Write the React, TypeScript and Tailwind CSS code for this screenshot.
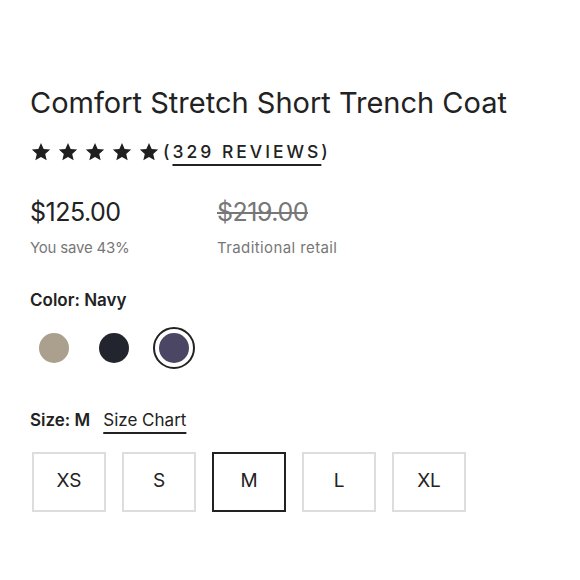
import React, { useState } from 'react';

const colors = [
    { name: 'Stone', hex: '#ab9f8e' },
    { name: 'Black', hex: '#22252e' },
    { name: 'Navy', hex: '#4a4663' },
];

const sizes = ['XS', 'S', 'M', 'L', 'XL'];

const Star = () => (
    <svg viewBox="0 0 24 24" className="w-[22px] h-[22px]" fill="#1f1f1f">
        <path d="M12 2.2l2.9 6.6 7.1.6-5.4 4.7 1.6 7-6.2-3.7-6.2 3.7 1.6-7L2 9.4l7.1-.6z" />
    </svg>
);

export default function App() {
    const [color, setColor] = useState('Navy');
    const [size, setSize] = useState('M');

    return (
        <div className="w-[580px] h-[580px] bg-white px-[30px] pt-[86px] text-[#222]" style={{ fontFamily: 'Inter, "Liberation Sans", sans-serif' }}>
            <h1 className="text-[29px] leading-[34px] font-normal">Comfort Stretch Short Trench Coat</h1>

            <div className="flex items-center mt-[20px] h-[24px]">
                <div className="flex gap-[5px]">
                    <Star />
                    <Star />
                    <Star />
                    <Star />
                    <Star />
                </div>
                <span className="ml-[3px] text-[17.5px] tracking-[3px] font-medium">
                    (<span className="underline underline-offset-[6px] decoration-[2px]">329 REVIEWS</span>)
                </span>
            </div>

            <div className="flex mt-[33px]">
                <div className="w-[187px]">
                    <div className="text-[25px] leading-[30px] tracking-[-0.5px]">$125.00</div>
                    <div className="text-[15px] text-[#777] mt-[10px] tracking-[-0.2px]">You save 43%</div>
                </div>
                <div>
                    <div className="text-[25px] leading-[30px] tracking-[-0.5px] text-[#777] line-through decoration-[2px]">$219.00</div>
                    <div className="text-[15px] text-[#777] mt-[10px] tracking-[0.4px]">Traditional retail</div>
                </div>
            </div>

            <div className="mt-[28px] text-[17px] font-semibold">Color: {color}</div>
            <div className="flex items-center gap-[18px] mt-[14px] ml-[3px]">
                {colors.map((c) => (
                    <button
                        key={c.name}
                        onClick={() => setColor(c.name)}
                        className={`w-[42px] h-[42px] rounded-full flex items-center justify-center ${color === c.name ? 'border-[2px] border-[#222]' : ''}`}
                    >
                        <span className="w-[30px] h-[30px] rounded-full block" style={{ backgroundColor: c.hex }} />
                    </button>
                ))}
            </div>

            <div className="flex items-center mt-[39px] text-[17px]">
                <span className="font-semibold">Size: {size}</span>
                <span className="ml-[13px] underline underline-offset-[6px] decoration-[2px]">Size Chart</span>
            </div>
            <div className="flex gap-[16px] mt-[18px] ml-[2px]">
                {sizes.map((s) => (
                    <button
                        key={s}
                        onClick={() => setSize(s)}
                        className={`w-[74px] h-[60px] flex items-center justify-center text-[19px] ${size === s ? 'border-[2px] border-[#222]' : 'border-[2px] border-[#ddd]'}`}
                    >
                        {s}
                    </button>
                ))}
            </div>
        </div>
    );
}
